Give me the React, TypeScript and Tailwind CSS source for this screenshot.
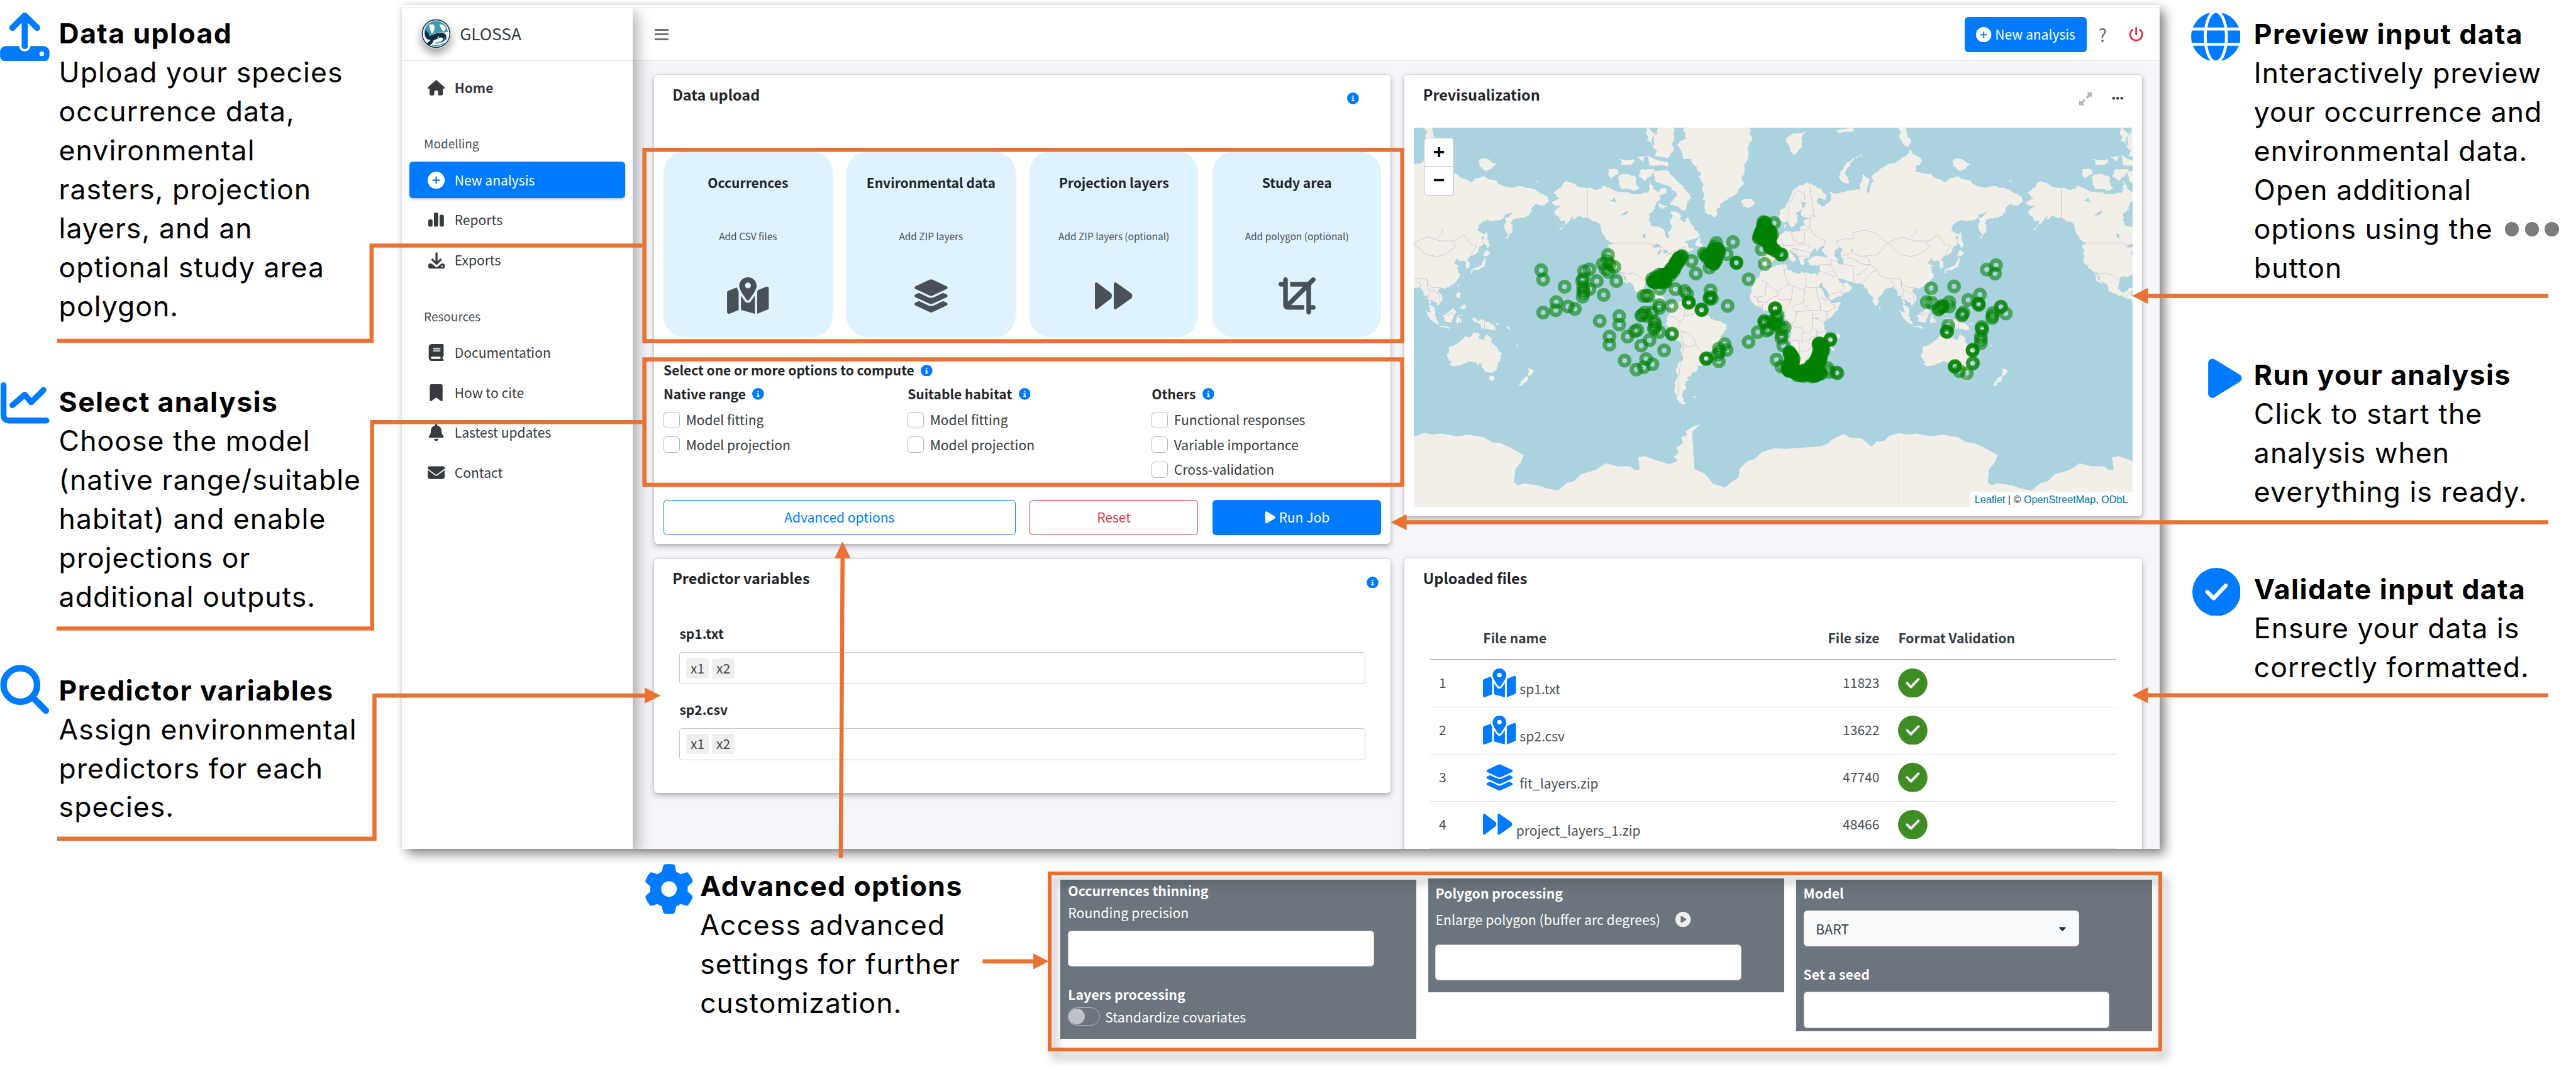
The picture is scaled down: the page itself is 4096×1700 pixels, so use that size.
import React from "react";
import {
  FaBell,
  FaBook,
  FaBookmark,
  FaCaretDown,
  FaCircleInfo,
  FaCirclePlay,
  FaCrop,
  FaEllipsis,
  FaEnvelope,
  FaGear,
  FaHouse,
  FaLayerGroup,
  FaMapLocationDot,
  FaPlay,
  FaPowerOff,
  FaUpRightAndDownLeftFromCenter,
} from "react-icons/fa6";

/* ---------- icons ---------- */

type IconProps = { className?: string };

const UploadIcon = ({ className }: IconProps) => (
  <svg viewBox="0 0 84 84" className={className} fill="none">
    <rect x="0" y="58" width="84" height="26" rx="10" fill="currentColor" />
    <circle cx="42" cy="57" r="10" fill="white" />
    <path d="M42 7V58M21 27L42 6L63 27" stroke="currentColor" strokeWidth="10.5" strokeLinecap="round" strokeLinejoin="round" />
    <circle cx="71" cy="71" r="4" fill="white" />
  </svg>
);

const DownloadIcon = ({ className }: IconProps) => (
  <svg viewBox="0 0 84 84" className={className} fill="none">
    <rect x="0" y="58" width="84" height="26" rx="10" fill="currentColor" />
    <path d="M18 46L42 66L66 46" stroke="white" strokeWidth="20" strokeLinecap="round" strokeLinejoin="round" />
    <path d="M42 6V58M21 38L42 59L63 38" stroke="currentColor" strokeWidth="10.5" strokeLinecap="round" strokeLinejoin="round" />
    <circle cx="70" cy="72" r="4" fill="white" />
  </svg>
);

const LineChartIcon = ({ className }: IconProps) => (
  <svg viewBox="0 0 84 72" className={className} fill="none" stroke="currentColor" strokeWidth="10" strokeLinecap="round" strokeLinejoin="round">
    <path d="M6 6V56Q6 66 16 66H79M21 40L42 22L53 35L74 14" />
  </svg>
);

const SearchIcon = ({ className }: IconProps) => (
  <svg viewBox="0 0 84 84" className={className} fill="none" stroke="currentColor" strokeWidth="11" strokeLinecap="round">
    <circle cx="34.5" cy="34.5" r="28.5" />
    <path d="M56 56L78 78" />
  </svg>
);

const GlobeIcon = ({ className }: IconProps) => (
  <svg viewBox="0 0 84 84" className={className} fill="none">
    <circle cx="42" cy="42" r="42" fill="currentColor" />
    <path d="M0 29H84M0 55H84" stroke="white" strokeWidth="5" />
    <ellipse cx="42" cy="42" rx="18" ry="43" stroke="white" strokeWidth="5" />
  </svg>
);

const CheckIcon = ({ className }: IconProps) => (
  <svg viewBox="0 0 84 84" className={className} fill="none">
    <circle cx="42" cy="42" r="42" fill="currentColor" />
    <path d="M26 42L37 53L58 31" stroke="white" strokeWidth="7" strokeLinecap="round" strokeLinejoin="round" />
  </svg>
);

const PlusIcon = ({ className }: IconProps) => (
  <svg viewBox="0 0 30 30" className={className} fill="none">
    <circle cx="15" cy="15" r="15" fill="white" />
    <path d="M15 9.5V20.5M9.5 15H20.5" stroke="#007bff" strokeWidth="2.4" strokeLinecap="round" />
  </svg>
);

const ForwardIcon = ({ className }: IconProps) => (
  <svg viewBox="0 0 64 48" className={className} fill="currentColor">
    <path d="M0 4Q0 0 4 1.5L28 20Q30 24 28 28L4 46.500Q0 48 0 44Z" />
    <path d="M32 4Q32 0 36 1.500L62 20Q65 24 62 28L36 46.500Q32 48 32 44Z" />
  </svg>
);

const BarsIcon = ({ className }: IconProps) => (
  <svg viewBox="0 0 28 28" className={className} fill="currentColor">
    <rect x="0" y="13" width="7.500" height="13" rx="3" />
    <rect x="10" y="1" width="7.500" height="25" rx="3" />
    <rect x="20" y="5" width="7.500" height="21" rx="3" />
  </svg>
);

const Logo = () => (
  <svg viewBox="0 0 50 50" className="size-[50px] rounded-full shadow-[0_8px_16px_rgba(0,0,0,0.4)]">
    <circle cx="25" cy="25" r="25" fill="#fff" />
    <circle cx="25" cy="25" r="23.500" fill="#fff" stroke="#14304a" strokeWidth="1.800" />
    <path d="M5 25A20 20 0 0 1 45 22Q38 24 32 23Q20 24 12 30Q6 30 5 25Z" fill="#3b9dad" />
    <path d="M13 10L19 9Q24 12 22 18Q19 27 17 24Q14 17 13 10Z" fill="#fff" />
    <path d="M31 9Q39 9 42 16L38 22Q33 18 31 9Z" fill="#fff" />
    <path d="M7 19L12 24L14 29Q25 23 37 24Q44 26 42 34Q38 40 34 39Q41 30 30 32L20 37Q20 43 13 45L9 42L16 36Q5 35 6 24Z" fill="#0f2a43" />
    <path d="M40 30Q40 38 24 41Q36 43 44 32M18 45Q30 47 40 41" fill="none" stroke="#3b9dad" strokeWidth="1.300" />
    <circle cx="29" cy="31" r="1" fill="#fff" />
  </svg>
);

/* ---------- side notes ---------- */

function Note({ icon, title, lines, className }: { icon: React.ReactNode; title: string; lines: React.ReactNode[]; className?: string }) {
  return (
    <section className={`flex ${className ?? ""}`}>
      <div className="relative w-[100px] shrink-0 text-[#007bff]">{icon}</div>
      <div className="font-['Inter',sans-serif] text-[47.5px] leading-[66.1px] tracking-[1.15px] whitespace-nowrap text-black">
        <h2 className="font-bold tracking-[1.5px]">{title}</h2>
        {lines.map((l, i) => (
          <p key={i}>{l}</p>
        ))}
      </div>
    </section>
  );
}

/* ---------- world map ---------- */

const PERIOD = 971;
const toX = (lon: number) => 773 + lon * (PERIOD / 360);
const toY = (lat: number) => 865 - 251 * Math.log(Math.tan(Math.PI / 4 + (lat * Math.PI) / 360));

const parse = (s: string) =>
  s
    .trim()
    .split(/\s+/)
    .map((p) => p.split(",").map(Number) as [number, number]);

const noise = (x: number, y: number) => {
  const v = Math.sin(x * 12.9898 + y * 78.233) * 43758.5453;
  return v - Math.floor(v) - 0.5;
};

function roughen(pts: [number, number][], depth: number): [number, number][] {
  if (depth === 0) return pts;
  const out: [number, number][] = [];
  pts.forEach((a, i) => {
    const b = pts[(i + 1) % pts.length];
    const dx = b[0] - a[0];
    const dy = b[1] - a[1];
    const k = noise(a[0] + b[0], a[1] + b[1]) * 0.38;
    out.push(a);
    if (Math.hypot(dx, dy) > 4) out.push([(a[0] + b[0]) / 2 - dy * k, (a[1] + b[1]) / 2 + dx * k]);
  });
  return roughen(out, depth - 1);
}

const project = (s: string) => parse(s).map(([lon, lat]) => [toX(lon), toY(lat)] as [number, number]);
const area = (s: string) => "M" + roughen(project(s), 3).map((p) => p[0].toFixed(1) + " " + p[1].toFixed(1)).join("L") + "Z";
const line = (s: string) => "M" + project(s).map((p) => p[0].toFixed(1) + " " + p[1].toFixed(1)).join("L");

const LAND = [
  // North America
  "-168,65.6 -162,66.5 -164,67 -166.5,68.3 -163,69.5 -156.5,71.3 -150,70.5 -141,69.6 -135,69 -128,70.2 -124,69.5 -115,68.5 -108,68 -102,67.8 -96,68.2 -94,69.5 -94,71.9 -91,70 -88,68.5 -85,69.5 -82,69.5 -81.5,68 -86,67.5 -85.5,66.3 -90,64 -94,61.5 -94.5,58.8 -92.5,57 -88,56.5 -82.5,55.2 -82,53 -80,51.3 -79,51.5 -79,54.5 -76.5,56.5 -78,59 -77.5,62.4 -74,62.3 -70,61 -69.5,59 -67,58.3 -64.5,60.3 -62,57.5 -60,55.5 -57,54 -55.8,52.5 -59,51 -66,50.2 -69,48.5 -65,49.2 -64.5,47.8 -64,46.2 -60,46.5 -61,45.2 -65.5,43.5 -66.5,45 -70,43.7 -70.8,42.5 -70,41.7 -74,40.6 -75.5,38.5 -76,37 -75.6,35.3 -78,34 -81,32 -81.3,30 -80,27 -80.4,25.2 -81.5,25.8 -82.7,28 -84,30 -86,30.4 -89.5,30.2 -90,29.2 -94,29.6 -97,28 -97.5,25 -97.8,22.5 -96,19.2 -94.5,18.2 -92,18.6 -90.5,20 -90.3,21 -87,21.5 -87.7,18.5 -88.5,16 -84,15.9 -83.3,15 -83.7,11 -82,9 -79.5,9.5 -77.5,8.5 -77.5,7.3 -79.5,8.9 -80.3,7.4 -83,8.3 -85.7,10 -87.5,12.8 -91.5,14 -94.5,16.2 -98,16.2 -102,18 -105.5,20 -105.5,22 -109,25.5 -112.5,29.5 -114.7,31.7 -112.8,28 -109.5,23.2 -112,25.5 -115,28 -114.2,29 -117,32.5 -118.5,34 -120.6,34.6 -122,37 -124,39.5 -124.3,43 -124,46.2 -124.7,48.3 -122.5,48 -123,49.2 -127.5,51 -130,54 -131,56 -135,58.5 -139.5,59.7 -144,60 -148,60.8 -151,59.3 -151.5,61 -154,59.2 -158,57.5 -163,55 -158,58 -157.5,58.7 -162,58.8 -162,60 -165.5,61.3 -165,63 -161,64.3 -166,64.5",
  // South America
  "-77.5,8.5 -75.5,10.6 -74,11.2 -71.7,12.3 -71.5,10.8 -70,11.8 -68,10.6 -62,10.6 -60,8.5 -57,6 -52,4.8 -50,1.5 -48,-0.8 -44,-2.5 -40,-2.9 -37,-5 -35,-6 -35,-8.5 -37,-11.5 -39,-13.5 -39,-17.5 -41,-22 -44,-23 -48,-25.5 -48.7,-28.5 -52,-33 -54,-34.7 -58,-34.3 -57,-36 -58,-38.3 -62,-39 -62.3,-41 -65,-41 -64,-42.7 -67,-45.5 -65.8,-47.5 -69,-50.5 -68.5,-52.5 -65.5,-54.8 -69,-55.3 -73,-53 -75.5,-49 -74.5,-46 -73,-42 -73.5,-38 -71.6,-33 -70.3,-25 -70.2,-18.5 -76,-14.3 -79,-8 -81.2,-6 -81,-4.3 -80,-2.5 -81,-1 -80,0.8 -77.2,3.8 -77.5,7.3",
  // Greenland, Iceland, British Isles
  "-73,78.3 -68,76 -62,76 -58,74.5 -55,71.5 -54,69 -53.5,66.5 -52,64 -49,61.2 -44,59.9 -42.5,61.5 -40,65 -35,66.2 -27,68.3 -22,70.5 -22,73 -19,76 -18,80 -20,81.5 -60,83 -68,80.5 -66,79.3",
  "-24,65.5 -22,66.4 -16,66.5 -13.7,65 -18.5,63.4 -22.5,63.9",
  "-5.5,50.1 1.3,51.2 1.6,52.7 -1.5,55 -2,57.6 -3,58.6 -5.5,58.2 -5,54.8 -3,53.8 -4.8,52.5 -3.5,51.4",
  "-10,51.7 -6.2,52.2 -6,54 -7.5,55.3 -10,54.2",
  // Eurasia
  "-9,37 -9.4,38.7 -8.8,43.2 -1.8,43.4 -1.2,46 -4.5,48.4 -1.5,49 1.6,50.9 4.5,52.3 8,53.7 8.5,57 10.5,57.7 10,54.5 14,54.2 19,54.4 21,56.5 24,57.3 23.5,59.2 30,59.9 25,60.2 21.5,61 21.5,63 25.4,65 22,65.7 17.5,62 18.5,60 16.5,57 14,55.4 11.2,58.8 8,58 5.3,59 5,62 10,64 14,67.5 19,70 25.5,71 31,70.3 41,67.5 40,66.2 34,66.7 37,64 41,65 44,66 43.5,68.5 54,68.5 60,69 67,69 67,71 69,73 73,72 72.5,68 75,72.5 81,73.6 87,75 98,76.3 104,77.7 113,75.8 108,73.5 120,73 130,71 140,72.5 150,71.5 160,69.7 170,70 180,69 190,66 186,64.5 180,65 177,62.5 170,60 163,59.5 162,56 157,51 155.5,57 163,62 157,61.5 152,59 143,59.2 135.5,54.7 141,53 140,48.5 135.5,44 130.7,42.3 127.5,39.8 129.4,37 129,35.2 126.5,34.5 126.7,37.5 124.8,39.8 121.3,39 121,40.8 118,39 119,37.2 122.5,37 119.3,35 121.8,31.5 121.5,28.5 118,24.5 114,22.3 110.3,21 108,21.6 105.8,19 109,13 107,10.4 104.8,8.7 105,10.5 101,12.8 100,13.4 99.3,9.5 103.4,4 103.8,1.4 101,3 98.3,8 98.6,12 97.5,16.5 94.5,16 94,19.5 91.5,22.7 87,21.3 82.3,16.7 80.2,15 80,11 77.6,8.1 76,11 73,17.5 72.5,21 70.5,21 67,24.8 61.5,25.1 57,26.5 51.5,27.8 48.5,30.2 48,29.5 50.8,24.8 51.5,25.5 54,24.2 56.3,26 59.8,22.5 57.5,19 52,15.6 45,12.8 43.2,13 42.5,16.5 39,21.5 35,28 34.3,27.8 32.6,29.8 34.2,31.3 35.5,34 36,36.7 30.5,36.5 27.5,37 26.5,39.5 29,41 35,42 41.5,41.3 37,45 39,47.2 35,46.2 33,44.5 33,46 30.8,46.2 28,43 28,41.3 23.8,40.5 24,38 22.5,36.5 19.5,40.5 19.5,41.8 15,44.5 13.5,45.6 12.3,44.8 16,41.5 18.3,40 16.5,39.7 16,38 12.5,41.5 8.9,44.3 3.2,43.2 -0.2,39 -2,36.8 -5.6,36.1",
  // Africa, Madagascar
  "32.6,29.8 35.5,24 37.3,20.5 39.5,15.5 43.2,12 44.5,10.5 51,11.8 50,8 46,2.5 41,-2 39.2,-6 40.6,-11 40.5,-15 35,-20 35.4,-24 32.7,-27 30,-31.5 26,-33.8 20,-34.8 18.2,-33.5 17,-29 14.5,-22.5 11.8,-17 13.7,-11 12.2,-6 9,-1 9.5,4 6,4.3 4.2,6.3 -2,4.8 -7.5,4.4 -13,8.5 -17,12.5 -17.4,14.7 -16.3,19 -17,21.2 -14,26.5 -9.8,30 -9.5,32.3 -6,35.8 -2,35.1 3,36.8 10,37.3 11,35.5 10.2,34 15.3,32.3 20,31 21.5,32.8 29,31 34.2,31.3",
  "49.3,-12 50.4,-15.7 47,-25 44,-25 43.5,-22 44.5,-16.3",
  // Oceania and South-East Asia
  "114,-22 113.7,-26 115.8,-32 115,-34.3 118,-35 123.5,-33.9 129,-31.6 134,-32.6 136,-34.8 138,-33 138.5,-35.6 141,-38.3 146.5,-39 150,-37.3 153,-31.5 153.3,-26 150.5,-22.8 146.3,-19 145.3,-15 142.5,-10.8 141.6,-14 140.5,-17.6 136,-15.5 136.8,-12.2 132,-11.4 129.5,-15 126,-14 122.2,-18",
  "144.7,-40.8 148.2,-40.9 147.5,-43.5 146,-43.5",
  "173,-34.5 175.5,-36.7 178.4,-37.8 177,-39.5 175.3,-41.6 174,-39.3 174.8,-38",
  "172.8,-40.6 174.2,-41.8 171,-44.5 170,-46.3 166.5,-46 168.5,-44",
  "131,-0.8 134,-1 135,-3.3 138,-1.7 144.5,-4 147.5,-6 150.5,-10.5 147,-9.8 143,-9 138,-8.2 138,-5.5 133,-4",
  "109,1.5 113,3.2 117,7 119,5 117.5,1 116,-4 110.2,-2.9",
  "95.3,5.6 98,4.2 104,-1.5 106,-5.8 101,-3",
  "105.3,-6.8 108.5,-6.7 114.5,-7.8 114.3,-8.7 108,-7.8",
  "120,1 125,1.5 120.8,0.3 123,-4.5 121.5,-2.8 120,-5.5 119,-3",
  "120.5,18.5 122.2,18.4 121.7,14 124,13 120.5,14.5",
  "122,7 125.5,9.7 126.4,7 125.5,5.7",
  "149,-5.5 152,-4.3 151,-6",
  "155,-6 160,-9 161,-10.5",
  "164,-20 167,-22.2 165.5,-21.5",
  // Japan, Sakhalin, Taiwan, Sri Lanka
  "131,34 136,35.8 139,38 141.3,41.4 142,39.5 140.8,35.7 136,33.7",
  "140,42 141.7,45.4 145.3,43.4 143.2,42",
  "130,33.5 132,33.5 131,31.3 130.2,31.5",
  "142,54.2 143.5,53 144,49.2 142.8,46.2 142,48",
  "121.5,25.2 120.8,22.2 120.2,23",
  "80,9.6 81.8,7.5 80.4,6",
  // Caribbean, Newfoundland
  "-84.8,21.9 -82,23.1 -77,21.6 -74.3,20.2 -77.5,19.9 -80,21.7",
  "-74,19.8 -70,19.8 -68.5,18.4 -72,17.8 -74.3,18.4",
  "-59.3,47.7 -57,50.8 -55.6,51.5 -53,47.2",
  // Arctic islands
  "11,79.5 16,80 25,80.4 22,78.3 16,76.7 13,78",
  "51.5,71.5 55,75 68,76.9 60,75.5 57,72 57,70.7",
  "47,80.5 60,80.8 62,80.2 50,80",
  "95,80.9 100,81 105,79 102,78 96,79.5",
  "138,76 143,76 150,75 142,73.4",
  "179,71.5 182,71.3 181,70.9",
  "-90,73.5 -80,73.7 -76,72.5 -68,70 -62,66.8 -65,65 -66,62.5 -72,64 -78,64.6 -73,67.5 -79,70 -89,71",
  "-90,76.5 -80,76.2 -75,79 -65,82 -60,83 -95,83 -88,80",
  "-95,76.8 -80,75.5 -80,74.6 -92,74.7",
  "-117,72.5 -110,73 -105,72.5 -101,69.5 -106,68.8 -115,69.3",
  "-125,74 -119,74 -117,73 -123,71.2",
  "-117,76 -106,76 -108,74.8 -115,74.8",
  "-101,73.8 -90,74 -92,72.8 -97,71.3 -102,72.5",
  "-96,81 -89,80 -90,78.3 -96,79",
  "-104,76.5 -97,76.5 -98,75.2",
  "-87,65.5 -80,64 -84,63",
  "-61,-51.3 -58,-51.5 -60,-52.2",
]
  .map(area)
  .join("");

const WATER = [
  "47,45 51,47 53,45.5 51,43.5 53,40.5 54,37 50,37.3 49,40.5",
  "-92,46.8 -88,48.7 -84.5,46.6 -88,46.8",
  "-88,42 -87.5,44.5 -85,46 -86.2,43",
  "-84,46 -80,45 -82.2,43.2 -83.5,44",
  "-83,41.5 -79,42.9 -76.3,44 -79.5,43.3",
  "32,0.3 34,-0.5 33,-2.5",
  "-124,66 -120,66.8 -119,65.5",
  "-116,61 -110,62.5 -113,61",
  "-98.5,53.5 -97,53 -97,50.5",
  "104,51.6 109.5,55.5 106,52",
  "58.5,45 60.5,46.5 61,44.500",
  "30,60.500 32.500,61.500 32,60",
]
  .map(area)
  .join("");

const BORDERS = [
  "-123,49 -95,49 -84,46.5 -79,43 -75,45 -67,47",
  "-141,69.6 -141,60 -135,58 -130,55",
  "-117,32.5 -111,31.3 -106,31.8 -101,29.5 -97,26",
  "-92,14.5 -90,17.5 -88.5,18",
  "-86,11 -84,11",
  "-60,5 -60,2 -67,1 -70,-4 -73,-8 -69,-11 -65,-12 -60,-16 -58,-22 -54,-26 -57,-30 -53.5,-33.7",
  "-69,-18 -68,-23 -70,-30 -71,-38 -72,-46 -72,-51",
  "-79,1 -75,-0.3 -70,-4",
  "-69,-11 -69.5,-17 -66,-22 -62,-22 -58,-20",
  "-72,12 -72,7 -67.5,6 -67,1",
  "-57,6 -57,2 -52,4",
  "50,47 48,50 55,51 61,51 61,54 70,55 77,54 87,49",
  "87,49 92,50.500 98,52 107,50 116,50 119,47 111,43 105,41.7 96,43 90,47 87,49",
  "116,50 119,50 125,53 131,48 135,48 131,43",
  "53,42 60,44 66,42 70,42 80,43 82,45 87,49",
  "56,41 60,41 66,38 70,37 74,37",
  "70,42 73,40 74,37 79,34 81,30 88,28 97,28 98,24 102,22 108,21.6",
  "36,37 44,37 44,40 48,39",
  "44,37 46,33 48,30",
  "36,33 42,31 47,29",
  "54,37 61,36 61,30 62,25",
  "61,30 66,31 70,34 74,37",
  "67,24.5 71,28 75,32 79,34",
  "43,17 52,19 55,22 52,24",
  "52,19 53,16",
  "89,26 92,25 92,22",
  "97,28 98,21 100,20 98,16 99,12",
  "101,20 105,18 107,15 107,11",
  "102,13.500 105,14",
  "28,70 29,67 31,62 28,60",
  "12,65 14,66 18,69 24,68 24,66",
  "12,65 12,59",
  "28,59.500 28,56 31,53 34,52 40,50 38,47",
  "24,54 24,52 23,48 28,48 28,46",
  "14,54 15,51 19,49 23,49",
  "24,57 28,56",
  "21,55 26,55",
  "6,51 8,48 7,44",
  "8,47.5 16,48 22,48",
  "14,46 17,46 22,45 28,44",
  "20,42 23,42 26,42",
  "17,46 19,43",
  "-2,43 3,42.5",
  "-7,42 -7,37.500",
  "-9,27 -5,25 3,19 12,24 9,31 8,37",
  "12,24 15,23 24,20 25,22 25,31",
  "25,22 37,22",
  "15,23 14,13",
  "24,20 23,11 15,8 14,7",
  "-5,25 -6,16 -12,15 -16,16",
  "3,19 4,16 0,15 -5,11 -12,12",
  "3,12 2,6",
  "4,13 14,13 10,7 8,4.500",
  "-12,15 -11,9 -8,7",
  "-8,10 -8,5",
  "-5,11 -3,10 -3,5",
  "23,11 28,5 36,5 42,4 48,8 43,11",
  "33,22 34,14 36,10 36,5",
  "36,15 42,12",
  "15,5 18,4 28,5",
  "18,4 17,-2 16,-4 13,-6",
  "13,-6 17,-8 22,-8 22,-11 24,-12",
  "30,4 30,-8 28,-12 24,-12",
  "24,-12 22,-13 22,-18 12,-17",
  "30,-1 34,-1 39,-5",
  "41,4 41,-2",
  "30,-8 35,-11.5 40,-11",
  "33,-10 33,-14 30,-15 25,-18 20,-18 20,-28",
  "20,-25 25,-25 31,-22 33,-16 34,-12",
  "17,-29 20,-28",
  "31,-22 32,-26",
  "141,-2.600 141,-9",
  "109.500,2 114,1.500 117,4",
]
  .map(line)
  .join("");

const ANTARCTICA =
  "M59 1251L75 1256L95 1253L125 1262L150 1257L180 1265L198 1282L215 1285L235 1300L262 1325L256 1350L245 1372L242 1415L250 1426L262 1419L290 1425L310 1436L332 1443L350 1418L365 1412L380 1388L410 1374L430 1352L455 1362L480 1362L490 1375L500 1373L497 1332L510 1328L530 1340L560 1355L578 1345L570 1330L580 1315L575 1300L588 1285L585 1266L597 1258L594 1245L612 1228L624 1222L607 1248L609 1290L612 1372L632 1385L650 1420L675 1433L690 1412L702 1400L705 1370L720 1345L735 1338L750 1315L775 1302L800 1304L830 1300L870 1296L885 1287L895 1272L918 1254L930 1266L955 1270L975 1297L985 1280L1000 1278L1010 1262L1030 1251V1500H59Z";

const SIGHTINGS = `298,709 302,740 346,764 329,815 328,842 302,850 353,830 367,838 418,878 458,862 458,890 438,930 438,957 469,1010
435,658 424,688 433,678 448,698 438,690 436,715 452,745 430,705 397,706 386,712 384,738 384,765 382,745 412,745 397,772 383,797 426,791 385,785 384,777
475,930 495,908 503,960 520,942 550,976 513,1005 526,1022 508,1032 493,1040 490,912 530,900 540,915 530,880 532,890 529,905 505,858 515,862 510,850 525,850 503,860
540,825 540,835 565,828 508,795 518,795 514,793 541,770 573,772 592,778 597,788 600,815 600,818 601,816 626,840 627,842 627,841 645,776 643,800 643,805 645,798 648,803 680,828 566,920 566,922
615,720 606,678 691,615 657,618 678,655 698,684 698,683 698,685 643,700 723,739 756,688 777,835 777,838 778,836 788,656 790,656 791,657 775,552 750,640
755,880 757,885 755,878 742,915 723,948 765,905 768,880 780,870 776,888 778,884 785,890 797,900 790,905 782,860 790,935 794,960 780,1007 760,910 791,925
674,955 678,975 662,970 664,980 636,1003 636,1005 637,1002 662,1012 660,990 890,940 890,942 891,938 903,1050 905,1052 885,1035 790,1030 888,1048
1230,692 1211,707 1228,720 1144,763 1097,769 1088,815 1098,817 1134,815 1134,830 1120,828 1122,830 1118,832 1112,840 1113,838 1173,808 1197,790 1194,822 1194,820 1195,825 1160,860 1163,850 1161,856
1240,830 1240,832 1250,853 1222,868 1223,852 1223,862 1201,898 1202,908 1200,903 1199,930 1199,940 1199,952 1182,975 1182,977 1182,974 1183,1018 1182,1020 1145,1030 1146,1030 1146,1028 1155,1045 1170,1052 1132,893 1129,914 1130,915 1129,912`;

const CLUSTERS = [
  "756,545 752,575 747,600 765,605 766,632 776,645",
  "765,575 770,600 758,610",
  "588,660 578,675 570,700 562,720 545,725 525,746 550,748 545,735",
  "632,655 645,672 655,650 662,640 650,688 645,660 657,632",
  "810,980 812,1010 805,1040 825,1057 862,1060 850,1035 868,1000 872,950",
  "800,1030 820,1045 845,1045 870,1050 862,1030 875,970 868,950",
];

function alongPath(s: string) {
  const pts = parse(s);
  const out: [number, number][] = [];
  for (let i = 0; i + 1 < pts.length; i++) {
    const [x0, y0] = pts[i];
    const [x1, y1] = pts[i + 1];
    const n = Math.max(4, Math.round(Math.hypot(x1 - x0, y1 - y0) / 3));
    for (let k = 0; k <= n; k++) {
      const x = x0 + ((x1 - x0) * k) / n;
      const y = y0 + ((y1 - y0) * k) / n;
      out.push([x + noise(x, y) * 8, y + noise(y, x) * 8]);
    }
  }
  return out;
}

const POINTS = [...parse(SIGHTINGS), ...CLUSTERS.flatMap(alongPath)];
const ASPECT = 1.625;

function WorldMap() {
  return (
    <div className="relative h-[644px] w-[1221px] overflow-hidden bg-[#aad3df]">
      <svg viewBox="37 234 1473 1263" preserveAspectRatio="none" className="size-full">
        {[-PERIOD, 0, PERIOD].map((dx) => (
          <g key={dx} transform={`translate(${dx} 0)`}>
            <path d={LAND} fill="#f2efe9" />
            <path d={ANTARCTICA} fill="#f2efe9" />
            <path d={WATER} fill="#aad3df" />
            <path d={BORDERS} fill="none" stroke="#cbb4cb" strokeWidth="1.2" strokeLinejoin="round" />
          </g>
        ))}
        <g transform={`scale(1 ${ASPECT})`} fill="none" stroke="#008000" strokeOpacity="0.57" strokeWidth="9">
          {POINTS.map(([x, y], i) => (
            <circle key={i} cx={x} cy={y / ASPECT} r="9.600" />
          ))}
        </g>
      </svg>
      <div className="absolute top-[17px] left-[17px] flex w-[52px] flex-col rounded-[6px] border-2 border-black/25 bg-white text-center font-['Liberation_Sans',sans-serif] text-[34px] leading-[46px] font-bold text-black">
        <span className="h-[48px] border-b-2 border-[#ccc]">+</span>
        <span className="h-[48px]">−</span>
      </div>
      <div className="absolute right-0 bottom-0 flex h-[26px] items-center bg-white/80 px-[8px] font-['Liberation_Sans',sans-serif] text-[17.300px] whitespace-pre text-[#333]">
        <span className="text-[#0078a8]">Leaflet</span> | © <span className="text-[#0078a8]">OpenStreetMap</span>, <span className="text-[#0078a8]">ODbL</span>
      </div>
    </div>
  );
}

/* ---------- app window ---------- */

const Info = ({ className }: IconProps) => <FaCircleInfo className={`size-[20px] text-[#007bff] ${className ?? ""}`} />;

function NavItem({ icon, label, active, bold }: { icon: React.ReactNode; label: string; active?: boolean; bold?: boolean }) {
  return (
    <div
      className={`mx-[13px] mb-[6px] flex h-[62px] items-center rounded-[6px] ${
        active ? "bg-[#007bff] text-white shadow-[0_2px_4px_rgba(0,0,0,0.25)]" : "text-[#343a40]"
      }`}
    >
      <span className="flex w-[77px] justify-center pl-[15px] text-[29px]">{icon}</span>
      <span className={`text-[22.5px] ${bold ? "font-bold" : ""}`}>{label}</span>
    </div>
  );
}

const NavHeader = ({ children }: { children: React.ReactNode }) => (
  <div className="flex h-[89px] items-end pb-[16px] pl-[38px] text-[20.3px] leading-[30px] text-[#495057]">{children}</div>
);

function Sidebar() {
  return (
    <aside className="relative z-10 w-[393px] shrink-0 bg-white shadow-[6px_8px_24px_rgba(0,0,0,0.35)]">
      <div className="flex h-[90px] items-center gap-[15px] border-b-2 border-[#dee2e6] pb-[3px] pl-[34px]">
        <Logo />
        <span className="text-[28px] text-[#343a40]">GLOSSA</span>
      </div>
      <div className="h-[14px]" />
      <NavItem icon={<FaHouse />} label="Home" bold />
      <NavHeader>Modelling</NavHeader>
      <NavItem icon={<PlusIcon className="size-[29px]" />} label="New analysis" active />
      <NavItem icon={<BarsIcon className="size-[27px]" />} label="Reports" />
      <NavItem icon={<DownloadIcon className="size-[28px]" />} label="Exports" />
      <NavHeader>Resources</NavHeader>
      <NavItem icon={<FaBook />} label="Documentation" />
      <NavItem icon={<FaBookmark />} label="How to cite" />
      <NavItem icon={<FaBell />} label="Lastest updates" />
      <NavItem icon={<FaEnvelope />} label="Contact" />
    </aside>
  );
}

function TopBar() {
  return (
    <header className="flex h-[90px] shrink-0 items-center border-b-2 border-[#dee2e6] bg-white pr-[27px] pl-[37px]">
      <div className="flex w-[23px] flex-col gap-[5px]">
        <span className="h-[3px] bg-[#6f7275]" />
        <span className="h-[3px] bg-[#6f7275]" />
        <span className="h-[3px] bg-[#6f7275]" />
      </div>
      <button className="ml-auto flex h-[60px] w-[207px] items-center justify-center gap-[6px] rounded-[6px] bg-[#007bff] text-[22.5px] text-white">
        <PlusIcon className="size-[26px]" />
        New analysis
      </button>
      <span className="ml-[19px] w-[16px] text-center text-[30px] leading-[60px] text-[#5f6870]">?</span>
      <FaPowerOff className="ml-[37px] size-[25px] text-[#dc3545]" />
    </header>
  );
}

const TILES = [
  { title: "Occurrences", hint: "Add CSV files", icon: <FaMapLocationDot className="h-[63px] w-[71px]" /> },
  { title: "Environmental data", hint: "Add ZIP layers", icon: <FaLayerGroup className="size-[63px]" /> },
  { title: "Projection layers", hint: "Add ZIP layers (optional)", icon: <ForwardIcon className="h-[48px] w-[64px]" /> },
  { title: "Study area", hint: "Add polygon (optional)", icon: <FaCrop className="size-[63px]" /> },
];

const OPTIONS = [
  { title: "Native range", items: ["Model fitting", "Model projection"] },
  { title: "Suitable habitat", items: ["Model fitting", "Model projection"] },
  { title: "Others", items: ["Functional responses", "Variable importance", "Cross-validation"] },
];

const CARD = "rounded-[6px] bg-white shadow-[0_4px_10px_rgba(0,0,0,0.28),0_0_3px_rgba(0,0,0,0.15)]";

function DataUpload() {
  return (
    <section className={`h-[797px] px-[16px] ${CARD}`}>
      <div className="flex h-[130px] items-start pt-[16px] pr-[38px] pl-[15px]">
        <h3 className="text-[25px] leading-[36px] font-bold">Data upload</h3>
        <Info className="mt-[14px] ml-auto" />
      </div>
      <div className="grid grid-cols-4 gap-[24px]">
        {TILES.map((t) => (
          <div key={t.title} className="flex h-[315px] flex-col items-center rounded-[36px] bg-[#def2ff] pt-[36px]">
            <div className="text-[22.5px] leading-[36px] font-bold whitespace-nowrap">{t.title}</div>
            <div className="mt-[54px] text-[16.500px] leading-[36px] text-[#495057]">{t.hint}</div>
            <div className="mt-[52px] flex h-[64px] items-center text-[#495057]">{t.icon}</div>
          </div>
        ))}
      </div>
      <div className="mt-[36px] flex h-[42px] items-center gap-[11px] text-[22.400px] font-bold">
        Select one or more options to compute <Info />
      </div>
      <div className="flex h-[199px]">
        {OPTIONS.map((o) => (
          <div key={o.title} className="w-[414.500px] shrink-0">
            <div className="flex h-[38px] items-center gap-[11px] text-[22.500px] font-bold">
              {o.title} <Info />
            </div>
            <div className="mt-[4px]">
              {o.items.map((it) => (
                <div key={it} className="flex h-[42.400px] items-center gap-[10px] text-[22.500px] text-[#343a40]">
                  <span className="size-[28px] rounded-[6px] border-2 border-[#adb5bd] bg-white" />
                  {it}
                </div>
              ))}
            </div>
          </div>
        ))}
      </div>
      <div className="grid grid-cols-4 gap-[24px] text-[22.500px]">
        <button className="col-span-2 h-[60px] rounded-[6px] border-2 border-[#007bff] text-[#007bff]">Advanced options</button>
        <button className="h-[60px] rounded-[6px] border-2 border-[#dc3545] text-[#dc3545]">Reset</button>
        <button className="flex h-[60px] items-center justify-center gap-[4px] rounded-[6px] bg-[#007bff] text-white">
          <FaPlay className="h-[23px] w-[21px]" />
          Run Job
        </button>
      </div>
    </section>
  );
}

function Predictors() {
  return (
    <section className={`mt-[25px] h-[398px] ${CARD}`}>
      <div className="flex h-[110px] items-start pt-[16px] pr-[21px] pl-[31px]">
        <h3 className="text-[25px] leading-[36px] font-bold">Predictor variables</h3>
        <Info className="mt-[14px] ml-auto" />
      </div>
      {["sp1.txt", "sp2.csv"].map((n) => (
        <div key={n} className="h-[129px] px-[43px]">
          <div className="h-[49px] text-[22.500px] leading-[36px] font-bold">{n}</div>
          <div className="flex h-[54px] items-center gap-[5px] rounded-[5px] border-2 border-[#c4cad0] pl-[10px]">
            {["x1", "x2"].map((x) => (
              <span key={x} className="h-[34px] w-[39px] rounded-[4px] bg-[#efefef] text-center text-[22.500px] leading-[34px] text-[#444]">
                {x}
              </span>
            ))}
          </div>
        </div>
      ))}
    </section>
  );
}

function Previsualization() {
  return (
    <section className={`h-[750px] px-[16px] ${CARD}`}>
      <div className="flex h-[90px] items-start pt-[16px] pr-[14px] pl-[16px]">
        <h3 className="text-[25px] leading-[36px] font-bold">Previsualization</h3>
        <FaUpRightAndDownLeftFromCenter className="mt-[14px] mr-[33px] ml-auto size-[22px] text-[#adb5bd]" />
        <FaEllipsis className="mt-[13px] size-[22px] text-[#343a40]" />
      </div>
      <WorldMap />
    </section>
  );
}

const FILES = [
  { name: "sp1.txt", size: 11823, icon: <FaMapLocationDot className="h-[50px] w-[56px]" /> },
  { name: "sp2.csv", size: 13622, icon: <FaMapLocationDot className="h-[50px] w-[56px]" /> },
  { name: "fit_layers.zip", size: 47740, icon: <FaLayerGroup className="mx-[3px] size-[50px]" /> },
  { name: "project_layers_1.zip", size: 48466, icon: <ForwardIcon className="mb-[6px] h-[38px] w-[50px]" /> },
];

function UploadedFiles() {
  return (
    <section className={`mt-[71px] h-[520px] px-[44px] ${CARD}`}>
      <h3 className="-ml-[12px] h-[102px] pt-[16px] text-[25px] leading-[36px] font-bold">Uploaded files</h3>
      <div className="flex h-[72px] items-center border-b-[3px] border-[#b9bdc1] pb-[2px] text-[22.500px] font-bold text-[#343a40]">
        <span className="w-[90px]" />
        <span className="flex-1">File name</span>
        <span className="w-[120px] text-right">File size</span>
        <span className="w-[402px] pl-[32px]">Format Validation</span>
      </div>
      {FILES.map((f, i) => (
        <div key={f.name} className="flex h-[80.100px] items-center border-b-2 border-[#dee2e6] pb-[3px] text-[22.500px] text-[#495057]">
          <span className="w-[90px] pl-[15px]">{i + 1}</span>
          <span className="flex flex-1 items-end gap-[6px]">
            <span className="flex h-[50px] items-end text-[#007bff]">{f.icon}</span>
            <span className="-mb-[3px] leading-[34px]">{f.name}</span>
          </span>
          <span className="w-[120px] text-right">{f.size}</span>
          <span className="w-[402px] pl-[32px] text-[#3f8c24]">
            <CheckIcon className="size-[50px]" />
          </span>
        </div>
      ))}
    </section>
  );
}

function AppWindow() {
  return (
    <div className="mt-[9px] h-[1433px] w-[2986px] bg-white pt-[4px] font-['Noto_Sans_CJK_SC','Noto_Sans',sans-serif] whitespace-nowrap text-[#212529] shadow-[10px_10px_18px_rgba(0,0,0,0.45),0_0_12px_rgba(0,0,0,0.12)]">
      <div className="flex h-[1429px] overflow-hidden border-t-2 border-[#dee0e2]">
        <Sidebar />
        <main className="flex flex-1 flex-col bg-[#f4f6f9]">
          <TopBar />
          <div className="flex gap-[23px] pt-[23px] pl-[36px]">
            <div className="w-[1251px]">
              <DataUpload />
              <Predictors />
            </div>
            <div className="w-[1253px]">
              <Previsualization />
              <UploadedFiles />
            </div>
          </div>
        </main>
      </div>
    </div>
  );
}

/* ---------- advanced options ---------- */

const Field = ({ className }: IconProps) => (
  <div className={`h-[61px] w-[520px] rounded-[6px] border-2 border-[#ced4da] bg-white ${className ?? ""}`} />
);

function AdvancedPanel() {
  return (
    <div className="relative flex h-[306px] w-[1893px] items-start gap-[21px] bg-white pt-[14px] pl-[22px] font-['Noto_Sans_CJK_SC','Noto_Sans',sans-serif] text-[22.700px] leading-[34px] whitespace-nowrap text-white">
      <div className="h-[271px] w-[604px] bg-[#6c757d] pt-[1px] pl-[13px]">
        <div className="font-bold">Occurrences thinning</div>
        <div className="mt-[4px]">Rounding precision</div>
        <Field className="mt-[14px]" />
        <div className="mt-[30px] font-bold">Layers processing</div>
        <div className="mt-[4px] flex items-center gap-[9px]">
          <span className="flex h-[31px] w-[54px] items-center rounded-full border-2 border-[#b6babe]">
            <span className="h-[27px] w-[27px] rounded-full bg-[#bdc1c5]" />
          </span>
          Standardize covariates
        </div>
      </div>
      <div className="-mt-[2px] h-[193px] w-[604px] bg-[#6c757d] pt-[8px] pl-[12px]">
        <div className="font-bold">Polygon processing</div>
        <div className="mt-[11px] flex items-center gap-[26px]">
          Enlarge polygon (buffer arc degrees) <FaCirclePlay className="size-[26px] text-[#eee]" />
        </div>
        <Field className="mt-[25px]" />
      </div>
      <div className="h-[258px] w-[604px] bg-[#6c757d] pt-[6px] pl-[12px]">
        <div className="font-bold">Model</div>
        <div className="mt-[13px] flex h-[61px] w-[468px] items-center justify-between rounded-[6px] border-2 border-[#e3e6e9] bg-[#f8f9fa] pr-[18px] pl-[20px] text-[#343a40]">
          BART <FaCaretDown className="size-[18px] text-[#1d2b3a]" />
        </div>
        <div className="mt-[30px] font-bold">Set a seed</div>
        <Field className="mt-[13px]" />
      </div>
      <div className="absolute inset-0 border-[7px] border-[#e97132] drop-shadow-[8px_12px_8px_rgba(0,0,0,0.35)]" />
    </div>
  );
}

/* ---------- callout lines ---------- */

function Callouts() {
  return (
    <svg viewBox="0 0 4375 1815" className="pointer-events-none absolute inset-0 z-20 h-[1815px] w-[4375px]" fill="none" stroke="#e97132" strokeWidth="7">
      <rect x="1094.5" y="254.5" width="1287" height="325" />
      <rect x="1094.5" y="610.5" width="1287" height="213" />
      <path d="M97 579H631V417H1091" />
      <path d="M96 1067.5H632V717H1091" />
      <path d="M97 1424.500H636V1181.500H1097" />
      <path d="M1428 1457L1431 945" />
      <path d="M1669 1633H1758" />
      <path d="M3645 502.500H4328" />
      <path d="M2387 887H4328" />
      <path d="M3645 1181H4328" />
      <g fill="#e97132" stroke="none">
        <path d="M1122 1181.500L1095 1168V1195Z" />
        <path d="M1431 920L1417.500 948H1444.500Z" />
        <path d="M1781 1633L1755 1619.500V1646.500Z" />
        <path d="M3621 502.500L3648 489V516Z" />
        <path d="M2362 887L2389 873.500V900.500Z" />
        <path d="M3621 1181L3648 1167.500V1194.500Z" />
      </g>
    </svg>
  );
}

export default function App() {
  return (
    <div className="relative flex h-[1815px] w-[4375px] overflow-hidden bg-white [zoom:0.93623]">
      <div className="w-[682px] shrink-0 pt-[25px]">
        <Note
          icon={<UploadIcon className="-mt-[5px] size-[84px]" />}
          title="Data upload"
          lines={["Upload your species", "occurrence data,", "environmental", "rasters, projection", "layers, and an", "optional study area", "polygon."]}
        />
        <Note
          className="mt-[97px]"
          icon={<LineChartIcon className="-mt-[3px] h-[72px] w-[84px]" />}
          title="Select analysis"
          lines={["Choose the model", "(native range/suitable", "habitat) and enable", "projections or", "additional outputs."]}
        />
        <Note
          className="mt-[93px]"
          icon={<SearchIcon className="-mt-[11px] size-[84px]" />}
          title="Predictor variables"
          lines={["Assign environmental", "predictors for each", "species."]}
        />
      </div>

      <div className="flex w-[2986px] shrink-0 flex-col">
        <AppWindow />
        <div className="flex">
          <Note
            className="mt-[31px] w-[690px] shrink-0 pl-[407px]"
            icon={<FaGear className="-mt-[5px] ml-[5px] size-[85px]" />}
            title="Advanced options"
            lines={["Access advanced", "settings for further", "customization."]}
          />
          <div className="mt-[38px] ml-[407px]">
            <AdvancedPanel />
          </div>
        </div>
      </div>

      <div className="flex-1 pt-[26px] pl-[53px]">
        <Note
          className="gap-[7px]"
          icon={<GlobeIcon className="-mt-[6px] size-[84px]" />}
          title="Preview input data"
          lines={[
            "Interactively preview",
            "your occurrence and",
            "environmental data.",
            "Open additional",
            <span className="flex w-[518px] items-center justify-between">
              options using the
              <span className="flex gap-[10px]">
                <i className="size-[24px] rounded-full bg-[#7b7b7b]" />
                <i className="size-[24px] rounded-full bg-[#7b7b7b]" />
                <i className="size-[24px] rounded-full bg-[#7b7b7b]" />
              </span>
            </span>,
            "button",
          ]}
        />
        <Note
          className="mt-[116px] gap-[7px]"
          icon={<FaPlay className="ml-[24px] h-[76px] w-[68px]" />}
          title="Run your analysis"
          lines={["Click to start the", "analysis when", "everything is ready."]}
        />
        <Note
          className="mt-[100px] gap-[7px]"
          icon={<CheckIcon className="-mt-[5px] ml-[2px] size-[82px]" />}
          title="Validate input data"
          lines={["Ensure your data is", "correctly formatted."]}
        />
      </div>
      <Callouts />
    </div>
  );
}
